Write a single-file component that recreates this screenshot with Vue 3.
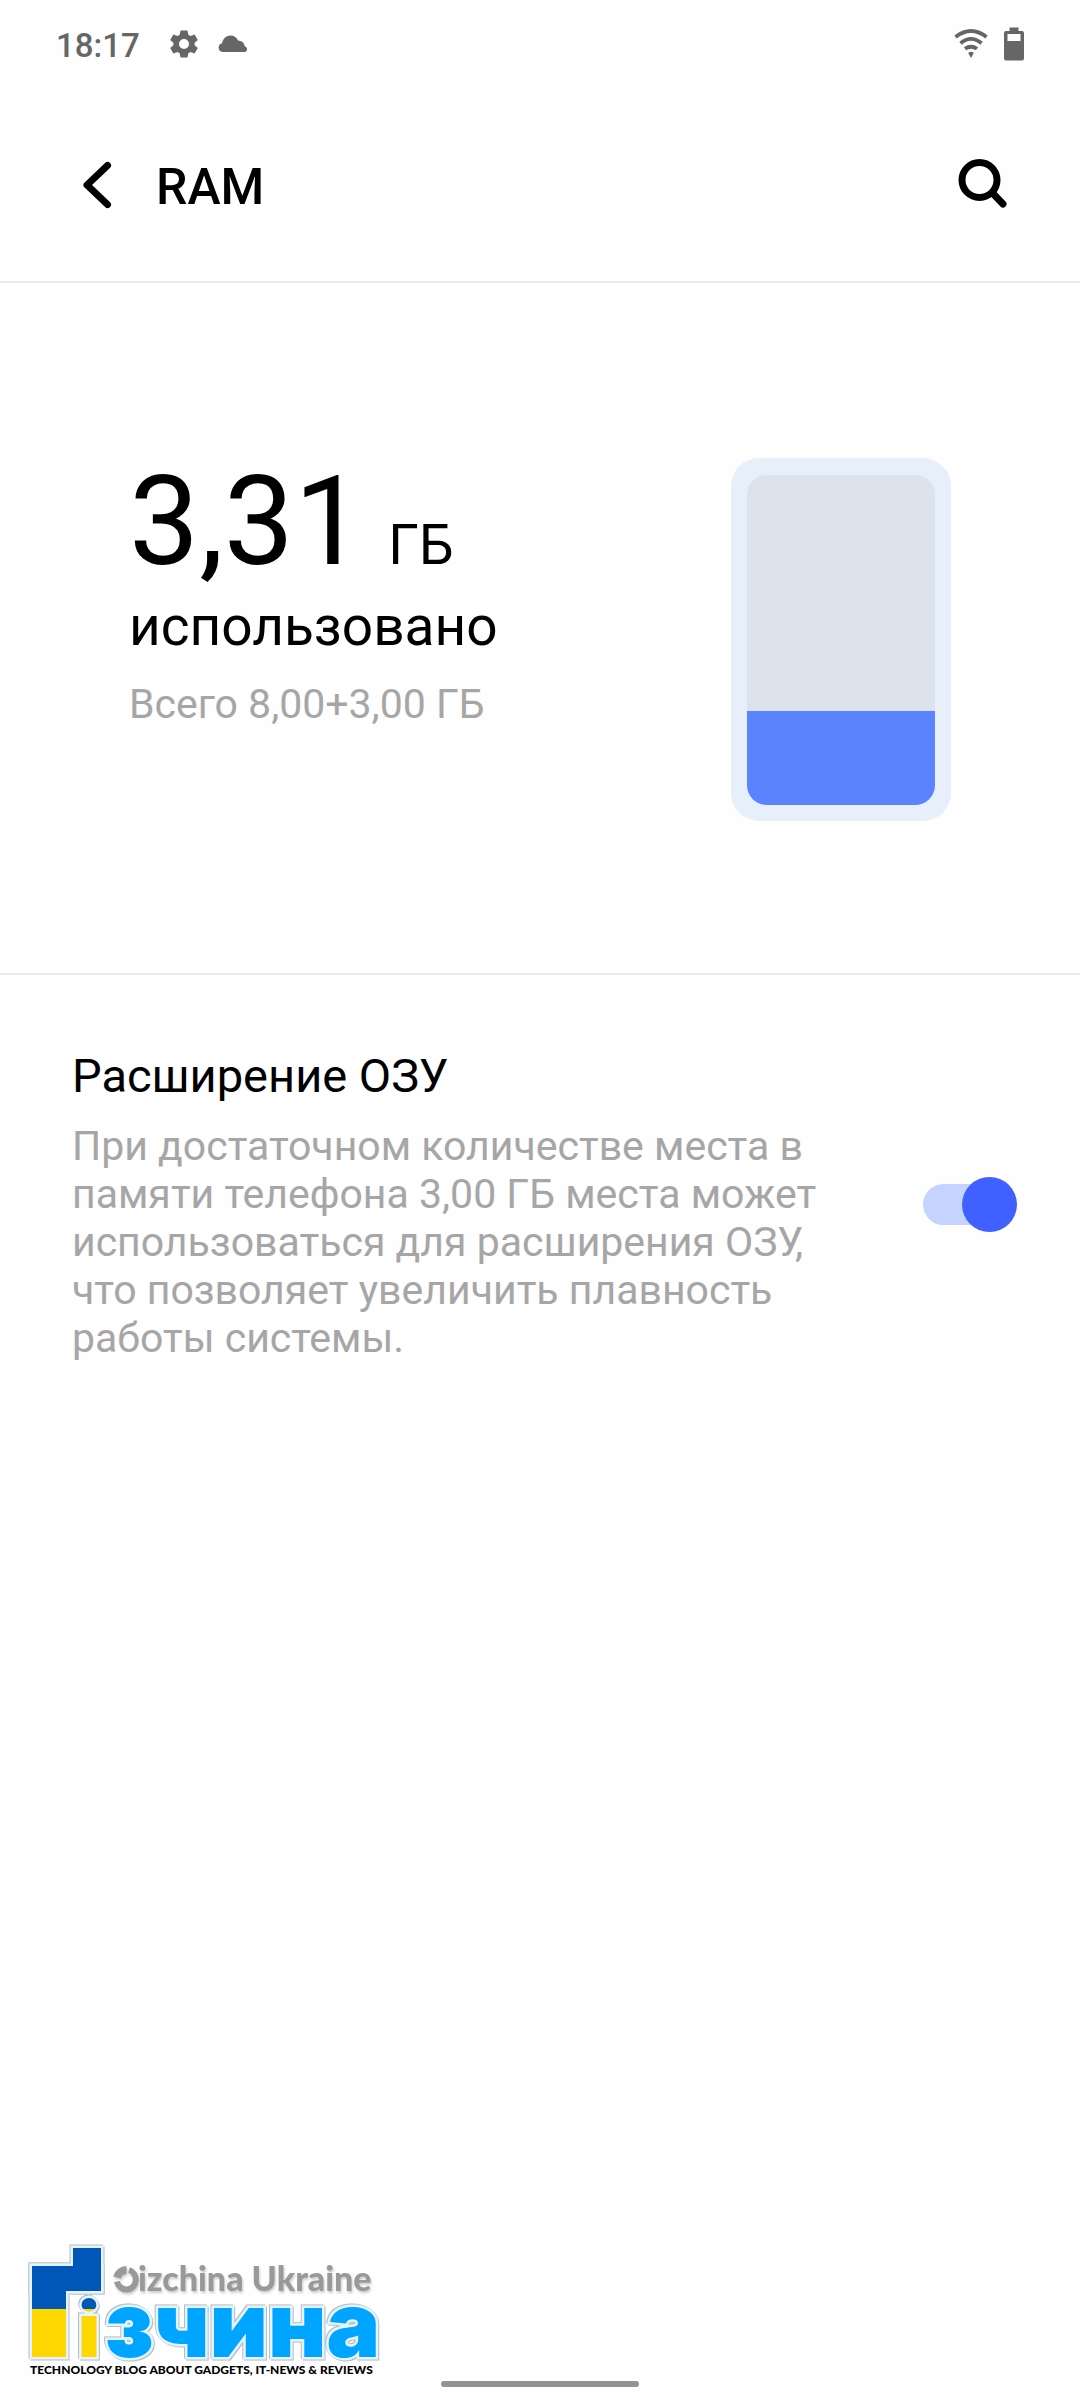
<script setup>
import { ref } from 'vue'

const used = ref(3.31)
const physical = 8
const extra = 3
const fillPixels = ref(94)
const expanded = ref(true)

const fmt = (n) => n.toFixed(2).replace('.', ',')
</script>

<template>
  <div class="screen">
    <div class="status">
      <div class="status-group">
        <span class="time">18:17</span>
        <svg class="gear" width="28" height="28" viewBox="0 0 28 28" aria-hidden="true">
          <path fill-rule="evenodd" d="M10.5 0.5h7l.8 4.2 2.2 1.3 4.1-1.5 3.2 5.6-3.2 2.7v2.4l3.2 2.7-3.2 5.6-4.1-1.5-2.2 1.3-.8 4.2h-7l-.8-4.2L7.500 22l-4.100 1.500-3.200-5.600 3.200-2.700v-2.400L.2 10.100l3.200-5.600 4.100 1.500 2.200-1.300zM14 9a5 5 0 1 0 0 10 5 5 0 0 0 0-10z" />
        </svg>
        <svg class="cloud" width="30" height="18" viewBox="0 0 30 18" aria-hidden="true">
          <path d="M4.500 17A4.500 4.500 0 0 1 4 8.200C5 3.500 8.500.5 12.500.5c3.500 0 6.300 2 7.700 5.300 3.500-.2 6 2 6.500 5.400A3 3 0 0 1 27 17z" />
        </svg>
      </div>
      <div class="status-group">
        <svg class="wifi" width="34" height="30" viewBox="0 0 34 30" aria-hidden="true">
          <g fill="none" stroke="#666" stroke-width="3.800">
            <path d="M1.500 8Q17-4 32.500 8" />
            <path d="M6.500 14.200Q17 5.500 27.500 14.200" />
            <path d="M11 19.800Q17 15.600 23 19.800" />
          </g>
          <path d="M14.200 24Q17 21.500 19.800 24L17 29z" />
        </svg>
        <svg class="battery" width="20" height="34" viewBox="0 0 20 34" aria-hidden="true">
          <path fill-rule="evenodd" d="M5.500 0.500h9v3.500H18a2 2 0 0 1 2 2v25.500a2 2 0 0 1-2 2H2a2 2 0 0 1-2-2V6a2 2 0 0 1 2-2h3.500zM3.500 7v7h13V7z" />
        </svg>
      </div>
    </div>

    <header class="bar">
      <button class="icon-button back" type="button" aria-label="Назад">
        <svg width="30" height="48" viewBox="0 0 30 48">
          <path d="M25.500 4.500L5 24l20.500 19.500" fill="none" stroke="#000" stroke-width="7" stroke-linecap="round" stroke-linejoin="round" />
        </svg>
      </button>
      <h1>RAM</h1>
      <button class="icon-button search" type="button" aria-label="Поиск">
        <svg width="50" height="50" viewBox="0 0 50 50">
          <circle cx="21.500" cy="22" r="17.500" fill="none" stroke="#000" stroke-width="7" />
          <path d="M34 34.500L45 46" stroke="#000" stroke-width="7" stroke-linecap="round" />
        </svg>
      </button>
    </header>

    <main>
      <section class="usage">
        <div class="usage-text">
          <p class="amount"><span class="number">{{ fmt(used) }}</span><span class="unit">ГБ</span></p>
          <p class="used">использовано</p>
          <p class="total">Всего {{ fmt(physical) }}+{{ fmt(extra) }} ГБ</p>
        </div>
        <div class="gauge" role="meter" aria-label="RAM" aria-valuemin="0" :aria-valuemax="physical + extra" :aria-valuenow="used">
          <div class="gauge-well">
            <div class="gauge-fill" :style="{ height: fillPixels + 'px' }"></div>
          </div>
        </div>
      </section>

      <section class="setting">
        <div class="setting-text">
          <label class="setting-title" for="expand">Расширение ОЗУ</label>
          <p id="expand-note" class="note">При достаточном количестве места в памяти телефона {{ fmt(extra) }} ГБ места может использоваться для расширения ОЗУ, что позволяет увеличить плавность работы системы.</p>
        </div>
        <input id="expand" v-model="expanded" class="switch" type="checkbox" role="switch" aria-describedby="expand-note" />
      </section>
    </main>

    <footer>
      <svg class="logo" width="360" height="136" viewBox="0 0 360 136" role="img" aria-label="Ґізчина">
        <defs>
          <linearGradient id="flag" gradientUnits="userSpaceOnUse" x1="0" y1="0" x2="0" y2="136">
            <stop offset="49%" stop-color="#0057b8" />
            <stop offset="49%" stop-color="#ffd700" />
          </linearGradient>
        </defs>
        <g class="outlined">
          <g stroke="#e6f4ff" stroke-width="5">
            <rect x="47" y="6" width="28" height="43" />
            <rect x="6" y="24" width="34" height="91" />
            <rect x="6" y="24" width="69" height="25" />
          </g>
          <g fill="url(#flag)">
            <rect x="47" y="6" width="28" height="43" />
            <rect x="6" y="24" width="34" height="91" />
            <rect x="6" y="24" width="69" height="25" />
          </g>
          <text class="word flag-letter" x="63" y="115" text-anchor="middle">і</text>
          <text class="word" x="79" y="115">зчина</text>
        </g>
        <g class="name">
          <g fill="none" stroke="#999">
            <path d="M91 35.500A10 10 0 0 1 100.500 28" stroke-width="8" />
            <path d="M103 28A9.500 10 0 1 1 91 39.500" stroke-width="6" />
          </g>
          <text x="112" y="49">izchina Ukraine</text>
        </g>
        <text class="tagline" x="4" y="132">TECHNOLOGY BLOG ABOUT GADGETS, IT-NEWS &amp; REVIEWS</text>
      </svg>
      <div class="home"></div>
    </footer>
  </div>
</template>

<style>
body {
  background: #fefefe;
}
</style>

<style scoped>
.screen {
  display: flex;
  flex-direction: column;
  min-height: 100vh;
  background: #fefefe;
  color: #000;
  font-family: Roboto, sans-serif;
}
h1,
p {
  margin: 0;
  font-weight: 400;
}
.status {
  display: flex;
  justify-content: space-between;
  align-items: center;
  height: 88px;
  padding: 0 56px;
  fill: #666;
  color: #666;
}
.status-group {
  display: flex;
  align-items: center;
}
.time {
  padding-top: 4px;
  font-size: 33px;
  line-height: 40px;
  font-weight: 500;
}
.gear {
  margin-left: 30px;
}
.cloud {
  margin-left: 20px;
}
.battery {
  margin-left: 16px;
}
.bar {
  display: flex;
  align-items: center;
  height: 193px;
  padding: 0 72px 0 82px;
  border-bottom: 2px solid #ebebeb;
}
.icon-button {
  display: flex;
  padding: 0;
  border: 0;
  background: none;
}
.search {
  padding-bottom: 4px;
}
h1 {
  flex: 1;
  margin-left: 44px;
  padding-top: 4px;
  font-size: 50px;
  line-height: 60px;
  font-weight: 500;
}
.usage {
  display: flex;
  justify-content: space-between;
  align-items: flex-start;
  padding: 175px 129px 152px;
  border-bottom: 2px solid #ebebeb;
}
.usage-text {
  padding-top: 2px;
}
.amount {
  display: flex;
  align-items: baseline;
}
.number {
  font-size: 125px;
  line-height: 124px;
}
.unit {
  margin-left: 24px;
  font-size: 55px;
  line-height: 64px;
}
.used {
  margin-top: 10px;
  font-size: 55px;
  line-height: 64px;
}
.total {
  margin-top: 22px;
  color: #a6a6a6;
  font-size: 41px;
  line-height: 48px;
}
.gauge {
  padding: 17px 16px 16px;
  border-radius: 28px;
  background: #e6effa;
}
.gauge-well {
  display: flex;
  flex-direction: column;
  justify-content: flex-end;
  width: 188px;
  height: 330px;
  overflow: hidden;
  border-radius: 20px;
  background: #dce3ed;
}
.gauge-fill {
  background: #5b82ff;
}
.setting {
  display: flex;
  align-items: center;
  gap: 72px;
  padding: 71px 63px 0 72px;
}
.setting-text {
  flex: 1;
}
.setting-title {
  display: block;
  font-size: 47px;
  line-height: 60px;
}
.note {
  margin-top: 16px;
  color: #a6a6a6;
  font-size: 41px;
  line-height: 48px;
}
.switch {
  appearance: none;
  display: grid;
  align-items: center;
  width: 94px;
  height: 55px;
  margin: 0;
}
.switch::before,
.switch::after {
  content: '';
  grid-area: 1 / 1;
  border-radius: 28px;
}
.switch::before {
  width: 88px;
  height: 41px;
  background: #dcdcdc;
}
.switch::after {
  width: 55px;
  height: 55px;
  background: #a6a6a6;
}
.switch:checked::before {
  background: #c4d3ff;
}
.switch:checked::after {
  justify-self: end;
  background: #4060ff;
}
footer {
  display: flex;
  flex-direction: column;
  margin-top: auto;
  padding: 0 26px 17px;
}
.logo {
  overflow: visible;
  font-family: Lato, sans-serif;
  font-weight: 900;
}
.outlined {
  filter: drop-shadow(1px 1px 0 #b4bcc4) drop-shadow(-1px -1px 0 #b4bcc4);
}
.word {
  font-family: Inter, sans-serif;
  font-size: 90px;
  fill: #00a5ff;
  stroke: #e6f4ff;
  stroke-width: 5px;
  paint-order: stroke;
}
.flag-letter {
  font-size: 76px;
  fill: url(#flag);
}
.name {
  fill: #999;
  font-size: 34px;
  filter: drop-shadow(1px 2px 1px #ccc);
}
.tagline {
  font-size: 12px;
}
.home {
  align-self: center;
  width: 198px;
  height: 6px;
  margin-top: 3px;
  border-radius: 3px;
  background: #949494;
}
</style>
